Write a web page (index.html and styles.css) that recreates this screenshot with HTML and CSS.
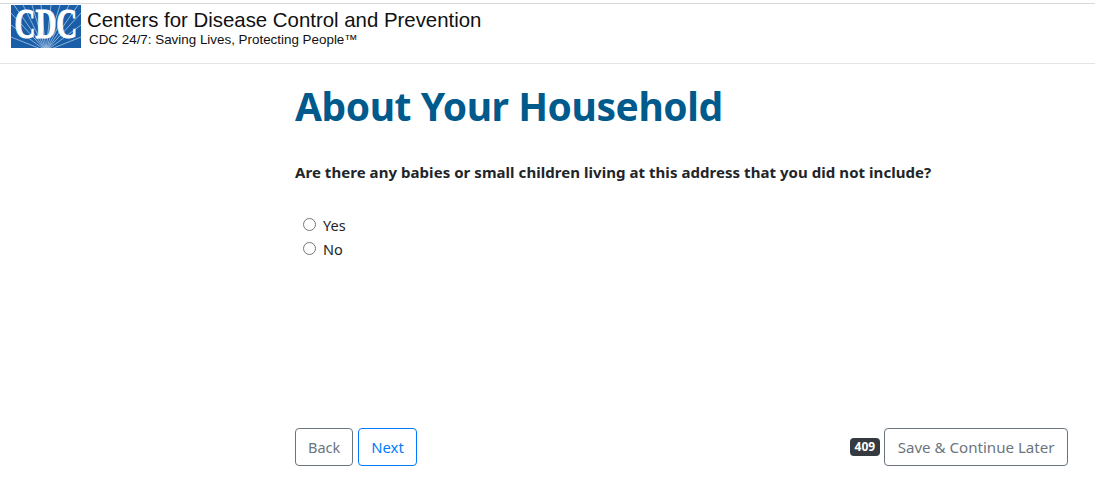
FILE: index.html
```html
<!DOCTYPE html>
<html lang="en">
<head>
<meta charset="utf-8">
<title>About Your Household</title>
<link rel="stylesheet" href="styles.css">
</head>
<body>
<header class="site-header">
  <svg class="logo" width="70" height="43" viewBox="0 0 70 43" role="img" aria-label="CDC">
    <rect width="70" height="43" fill="#1a5ea8"/>
    <svg width="70" height="43" viewBox="0 0 70 43">
      <g stroke="#a9c6e4" stroke-width=".8">
        <path d="M35 46 3 0M35 46 12 0M35 46 21 0M35 46 30 0M35 46 40 0M35 46 49 0M35 46 58 0M35 46 67 0M35 46 70 8M35 46 70 20M35 46 70 32M35 46 0 8M35 46 0 20M35 46 0 32"/>
      </g>
    </svg>
    <g transform="translate(3.5 33) scale(1 1.45)">
      <text class="logo-text" x="0" y="0">CDC</text>
    </g>
  </svg>
  <div class="brand">
    <div class="brand-title">Centers for Disease Control and Prevention</div>
    <div class="brand-sub">CDC 24/7: Saving Lives, Protecting People™</div>
  </div>
</header>
<main class="content">
  <h1 class="page-title">About Your Household</h1>
  <p class="question">Are there any babies or small children living at this address that you did not include?</p>
  <div class="options">
    <label class="option"><input class="radio" type="radio" name="kids"><span>Yes</span></label>
    <label class="option"><input class="radio" type="radio" name="kids"><span>No</span></label>
  </div>
  <div class="actions">
    <div class="nav-buttons">
      <button class="btn btn-gray" type="button">Back</button>
      <button class="btn btn-blue" type="button">Next</button>
    </div>
    <div class="save-group">
      <span class="badge">409</span>
      <button class="btn btn-gray btn-wide" type="button">Save &amp; Continue Later</button>
    </div>
  </div>
</main>
</body>
</html>
```
FILE: styles.css
```css
* { box-sizing: border-box; }
html, body { margin: 0; padding: 0; }
body {
  width: 1095px;
  height: 494px;
  overflow: hidden;
  background: #fff;
  color: #212529;
  font-family: "Noto Sans", "Open Sans", sans-serif;
  font-size: 16px;
}
.site-header {
  border-top: 1px solid #d8d8d8;
  border-bottom: 1px solid #e4e4e4;
  margin-top: 3px;
  height: 61px;
  padding: 1px 0 0 11px;
  display: flex;
  align-items: flex-start;
  gap: 6px;
}
.logo { display: block; flex: none; overflow: visible; }
.logo-text {
  font-family: "Liberation Serif", serif;
  font-weight: 700;
  font-size: 29px;
  fill: #fff;
  stroke: #fff;
  stroke-width: .7px;
}
.brand { color: #111; font-family: "Liberation Sans", sans-serif; }
.brand-title { font-size: 20.4px; line-height: 24px; margin-top: 3px; white-space: nowrap; }
.brand-sub { font-size: 13.4px; line-height: 16px; margin-left: 2px; white-space: nowrap; }
.content {
  width: 773px;
  margin-left: 295px;
  display: flex;
  flex-direction: column;
}
.page-title {
  margin: 12px 0 0;
  color: #005a8c;
  font-size: 39px;
  letter-spacing: -.45px;
  line-height: 60px;
  font-weight: 700;
}
.question {
  margin: 24px 0 0;
  font-weight: 700;
  font-size: 15px;
  letter-spacing: .05px;
  line-height: 24px;
}
.options {
  margin-top: 29px;
  padding-left: 8px;
  display: flex;
  flex-direction: column;
}
.option {
  display: flex;
  align-items: center;
  gap: 7px;
  height: 24px;
  font-size: 14.5px;
}
.radio { width: 13px; height: 13px; margin: 0 0 2px; }
.actions {
  margin-top: 167px;
  display: flex;
  justify-content: space-between;
  align-items: center;
}
.nav-buttons { display: flex; gap: 5px; }
.save-group { display: flex; align-items: center; gap: 4px; }
.btn {
  height: 38px;
  padding: 0 12px;
  background: #fff;
  border: 1px solid;
  border-radius: 4px;
  font-family: inherit;
  font-size: 14.5px;
}
.btn-wide { padding: 0 12.5px; font-size: 15.1px; }
.btn-gray { color: #6c757d; border-color: #6c757d; }
.btn-blue { color: #007bff; border-color: #007bff; font-size: 14.8px; }
.badge {
  background: #343a40;
  color: #fff;
  font-size: 12px;
  font-weight: 700;
  line-height: 12px;
  padding: 3px 5px;
  border-radius: 4px;
}
```
